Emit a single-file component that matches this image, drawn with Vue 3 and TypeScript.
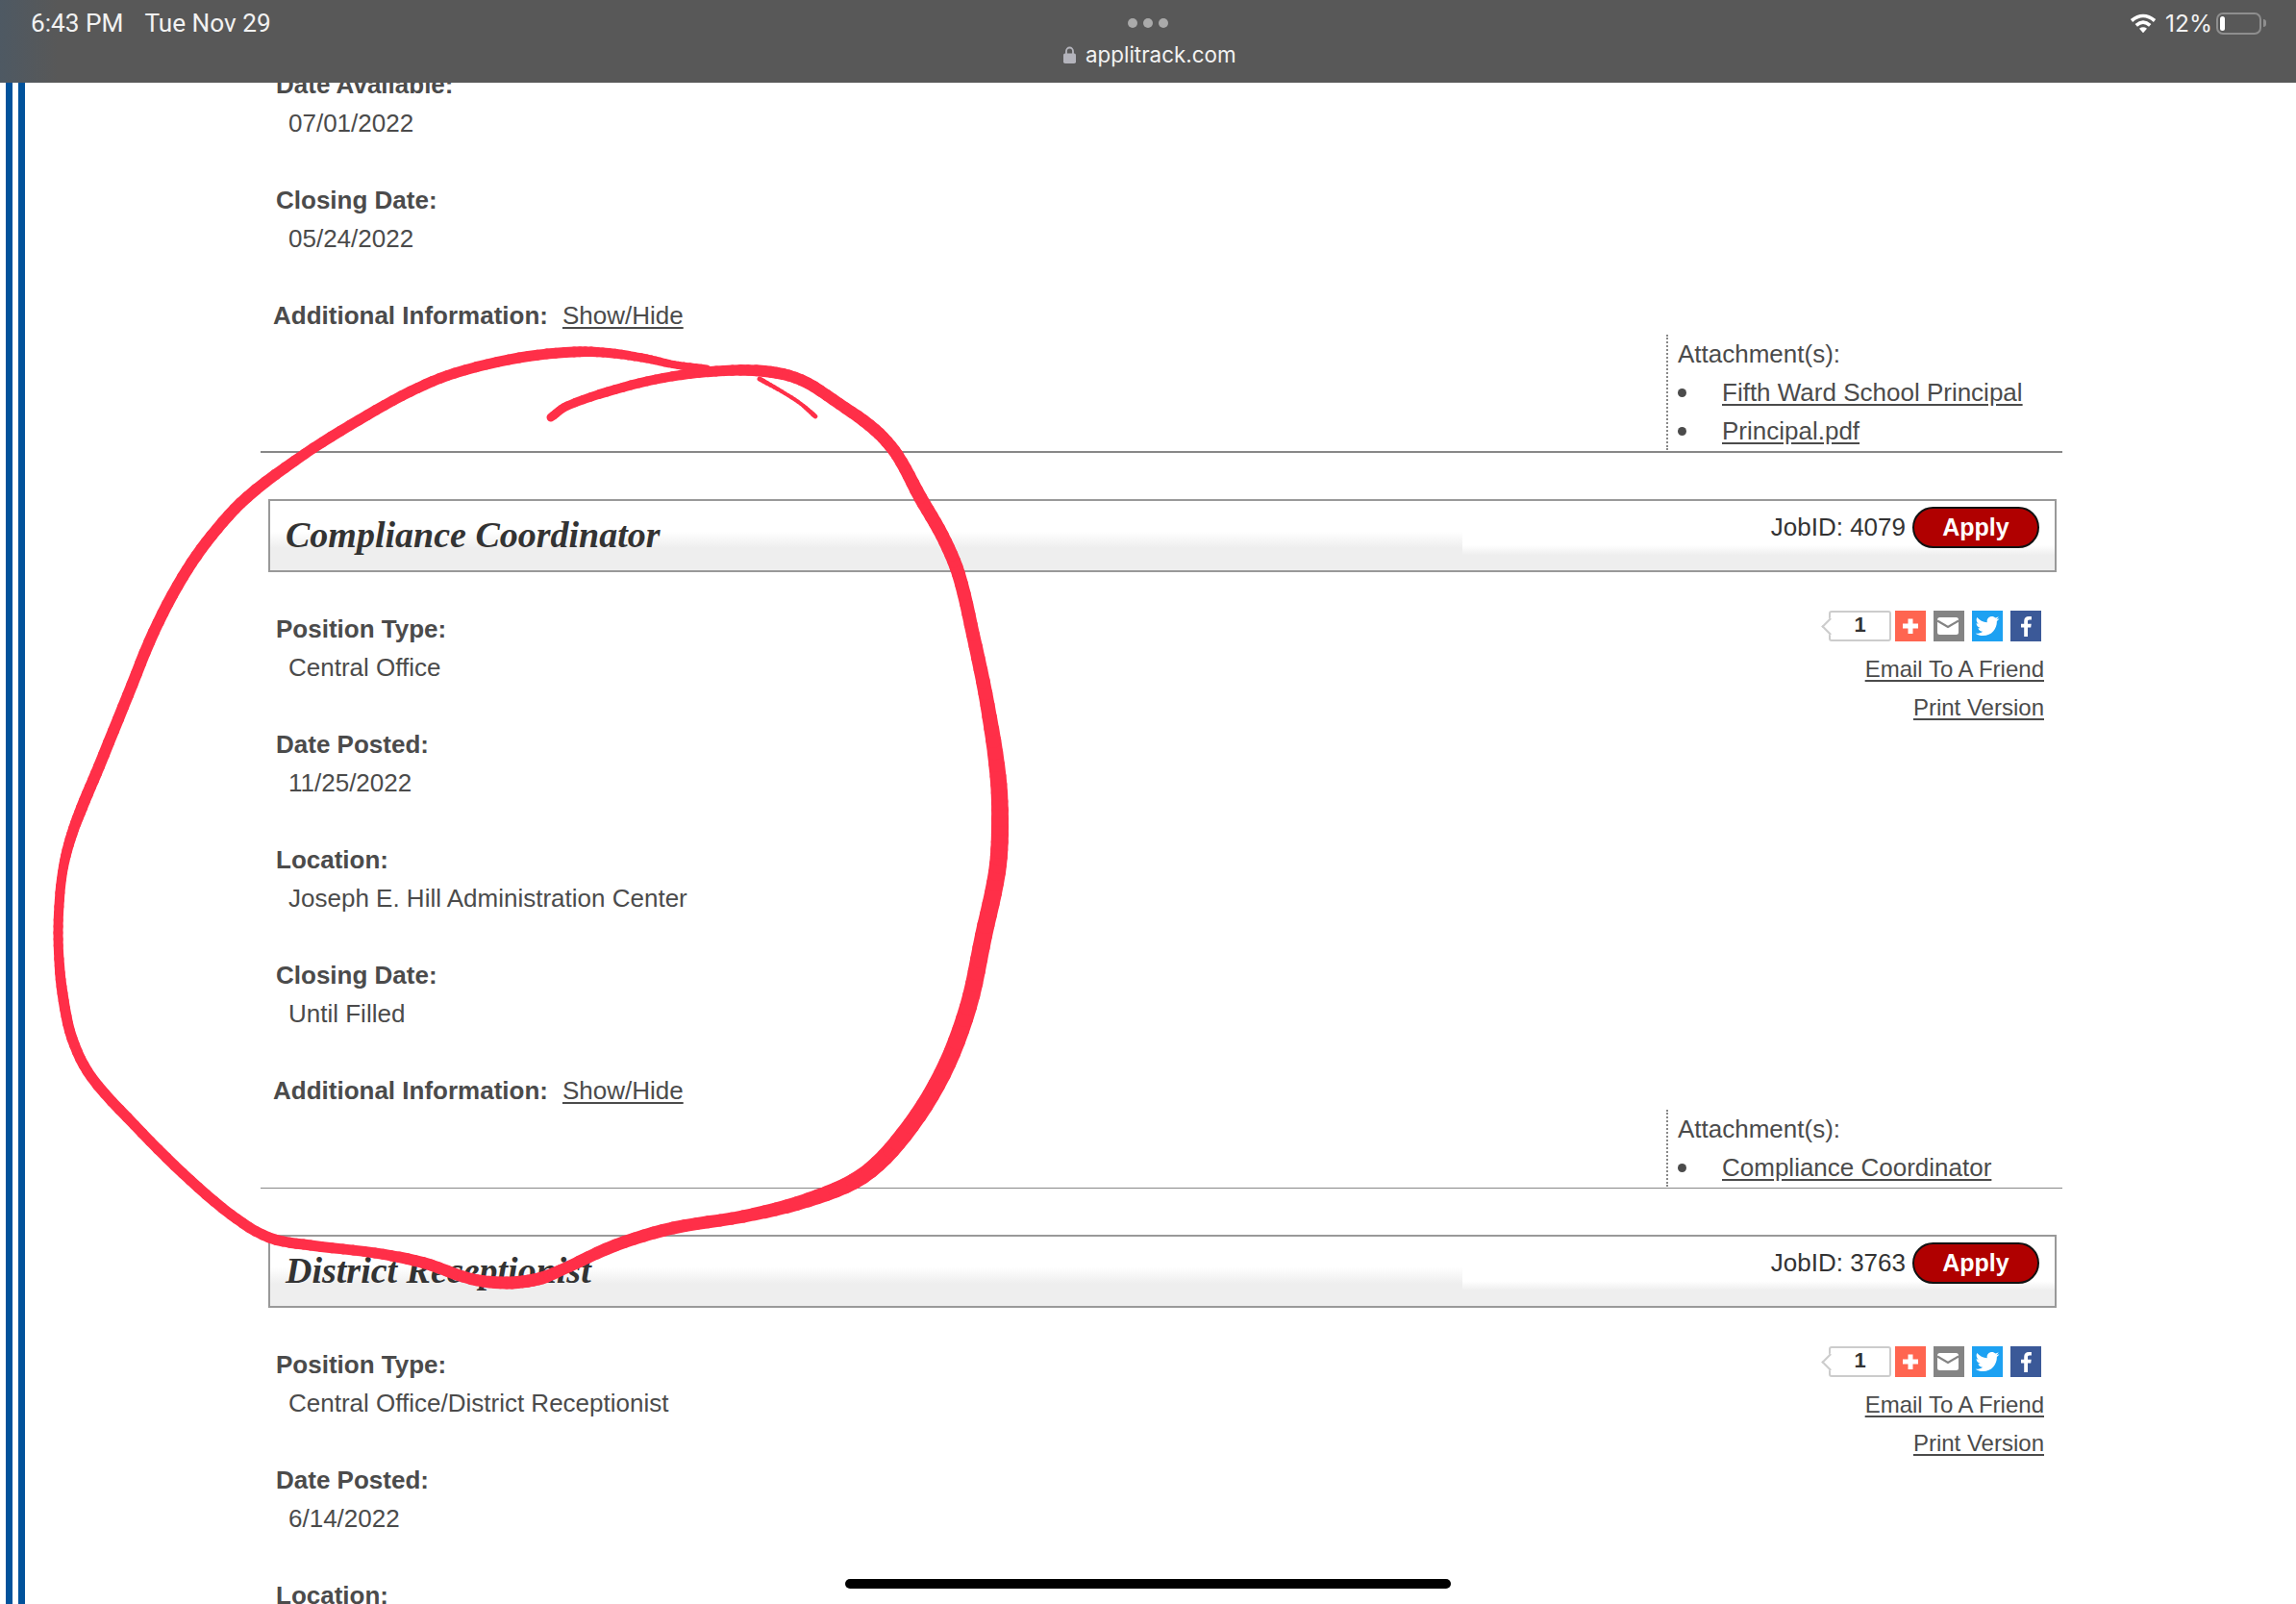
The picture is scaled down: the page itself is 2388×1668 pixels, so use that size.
<script setup lang="ts">
interface Field { label: string; value?: string }
interface Job {
  title?: string
  jobId?: string
  fields: Field[]
  showMore?: boolean
  attachments?: string[]
  thinRule?: boolean
}

const jobs: Job[] = [
  {
    fields: [
      { label: 'Date Available:', value: '07/01/2022' },
      { label: 'Closing Date:', value: '05/24/2022' },
    ],
    showMore: true,
    attachments: ['Fifth Ward School Principal', 'Principal.pdf'],
  },
  {
    title: 'Compliance Coordinator',
    jobId: '4079',
    fields: [
      { label: 'Position Type:', value: 'Central Office' },
      { label: 'Date Posted:', value: '11/25/2022' },
      { label: 'Location:', value: 'Joseph E. Hill Administration Center' },
      { label: 'Closing Date:', value: 'Until Filled' },
    ],
    showMore: true,
    attachments: ['Compliance Coordinator'],
    thinRule: true,
  },
  {
    title: 'District Receptionist',
    jobId: '3763',
    fields: [
      { label: 'Position Type:', value: 'Central Office/District Receptionist' },
      { label: 'Date Posted:', value: '6/14/2022' },
      { label: 'Location:' },
    ],
  },
]

// Hand-drawn marker stroke: x, y, width samples traced from the drawing.
type P = [number, number, number]
const mainStroke: P[] = [
  [735, 384, 9], [700, 379, 8], [673, 373, 9], [633, 367, 10], [597, 366, 11], [540, 372, 11], [473, 388, 11],
  [427, 407, 11], [373, 437, 11], [317, 472, 11], [257, 517, 12], [220, 557, 12], [190, 600, 12],
  [160, 657, 12], [133, 723, 12], [103, 797, 12], [85, 840, 12], [73, 873, 11], [65, 907, 10], [61, 950, 10], [61, 990, 10],
  [65, 1033, 11], [75, 1080, 11], [95, 1120, 11], [140, 1170, 11], [190, 1220, 11], [240, 1263, 11],
  [280, 1287, 11], [323, 1295, 11], [390, 1303, 11], [440, 1313, 12], [490, 1330, 12], [527, 1334, 13],
  [560, 1330, 13], [583, 1321, 12], [640, 1295, 13], [700, 1277, 13], [773, 1265, 13], [840, 1248, 15],
  [897, 1223, 17], [940, 1180, 18], [980, 1117, 18], [1007, 1047, 18], [1023, 973, 18], [1037, 907, 18],
  [1040, 860, 18], [1038, 807, 17], [1027, 733, 15], [1012, 660, 14], [997, 597, 14], [980, 557, 14],
  [957, 517, 14], [933, 473, 13], [910, 447, 13], [873, 420, 12], [833, 395, 12], [795, 386, 12],
  [745, 386, 11], [690, 393, 10], [640, 405, 10], [590, 422, 9], [573, 434, 9],
]
const tailStroke: P[] = [
  [790, 394, 5], [813, 407, 4], [833, 420, 4], [848, 433, 5],
]

function tangent(a: P, c: P): [number, number] {
  const dx = c[0] - a[0]
  const dy = c[1] - a[1]
  const l = Math.hypot(dx, dy) || 1
  return [dx / l, dy / l]
}

function segments(pts: P[]): { d: string; w: number }[] {
  // Short runs with interpolated widths, so the line swells without visible steps.
  const steps = 6
  const out: { d: string; w: number }[] = []
  for (let i = 0; i < pts.length - 1; i++) {
    const a = pts[Math.max(i - 1, 0)]
    const b = pts[i]
    const c = pts[i + 1]
    const d = pts[Math.min(i + 2, pts.length - 1)]
    const len = Math.hypot(c[0] - b[0], c[1] - b[1]) / 3
    const t1 = tangent(a, c)
    const t2 = tangent(b, d)
    const c1 = [b[0] + t1[0] * len, b[1] + t1[1] * len]
    const c2 = [c[0] - t2[0] * len, c[1] - t2[1] * len]
    const at = (t: number): string => {
      const u = 1 - t
      const x = u * u * u * b[0] + 3 * u * u * t * c1[0] + 3 * u * t * t * c2[0] + t * t * t * c[0]
      const y = u * u * u * b[1] + 3 * u * u * t * c1[1] + 3 * u * t * t * c2[1] + t * t * t * c[1]
      return `${x.toFixed(1)} ${y.toFixed(1)}`
    }
    for (let s = 0; s < steps; s++) {
      const t0 = s / steps
      const t = (s + 1) / steps
      out.push({ d: `M${at(t0)}L${at(t)}`, w: b[2] + (c[2] - b[2]) * (t0 + t) / 2 })
    }
  }
  return out
}

const marker = [...segments(mainStroke), ...segments(tailStroke)]
</script>

<template>
  <div class="screen">
    <div class="stripes"></div>

    <main class="content">
      <section v-for="(job, i) in jobs" :key="i" class="job">
        <header v-if="job.title" class="job-head">
          <h2 class="job-title">{{ job.title }}</h2>
          <div class="job-actions">
            <span class="job-id">JobID: {{ job.jobId }}</span>
            <a class="apply">Apply</a>
          </div>
        </header>

        <div class="job-body" :class="{ flush: !job.title }">
          <div class="fields">
            <div v-for="f in job.fields" :key="f.label" class="field">
              <div class="label">{{ f.label }}</div>
              <div v-if="f.value" class="value">{{ f.value }}</div>
            </div>
          </div>

          <aside v-if="job.title" class="share">
            <div class="share-row">
              <span class="count">1</span>
              <span class="tile plus">
                <svg viewBox="0 0 32 32" width="32" height="32"><path d="M13.500 8.500h5v5H24v5h-5.500V24h-5v-5.500H8v-5h5.500z" fill="#fff" /></svg>
              </span>
              <span class="tile mail">
                <svg viewBox="0 0 32 32" width="32" height="32">
                  <rect x="4" y="7" width="22" height="18" rx="2.500" fill="#fff" />
                  <path d="M4 10.500 15 17l11-6.500" fill="none" stroke="#848484" stroke-width="2.200" />
                </svg>
              </span>
              <span class="tile twitter">
                <svg viewBox="-3.500 -3.500 31 31" width="32" height="32"><path fill="#fff" d="M23.954 4.569c-.885.389-1.83.654-2.825.775 1.014-.611 1.794-1.574 2.163-2.723-.951.555-2.005.959-3.127 1.184-.896-.959-2.173-1.559-3.591-1.559-2.717 0-4.92 2.203-4.92 4.917 0 .39.045.765.127 1.124C7.691 8.094 4.066 6.13 1.64 3.161c-.427.722-.666 1.561-.666 2.475 0 1.71.87 3.213 2.188 4.096-.807-.026-1.566-.248-2.228-.616v.061c0 2.385 1.693 4.374 3.946 4.827-.413.111-.849.171-1.296.171-.314 0-.615-.03-.916-.086.631 1.953 2.445 3.377 4.604 3.417-1.68 1.319-3.809 2.105-6.102 2.105-.39 0-.779-.023-1.17-.067 2.189 1.394 4.768 2.209 7.557 2.209 9.054 0 13.999-7.496 13.999-13.986 0-.209 0-.42-.015-.63.961-.689 1.8-1.56 2.46-2.548l-.047-.02z" /></svg>
              </span>
              <span class="tile facebook">
                <svg viewBox="0 0 32 32" width="32" height="32"><path fill="#fff" d="M18 27V17.500h3.200l.5-3.800H18v-2.400c0-1.100.3-1.800 1.900-1.800h2V6.100c-.4 0-1.500-.1-2.900-.1-2.900 0-4.800 1.700-4.800 4.900v2.800H11v3.800h3.200V27z" /></svg>
              </span>
            </div>
            <a class="link small">Email To A Friend</a>
            <a class="link small">Print Version</a>
          </aside>
        </div>

        <div v-if="job.showMore" class="more">
          <span class="more-label">Additional Information:</span>
          <a class="link">Show/Hide</a>
        </div>

        <div v-if="job.attachments" class="attachments">
          <div class="attach-box">
            <div class="attach-title">Attachment(s):</div>
            <ul class="attach-list">
              <li v-for="a in job.attachments" :key="a"><a class="link">{{ a }}</a></li>
            </ul>
          </div>
        </div>
        <hr v-if="job.attachments" class="rule" :class="{ thin: job.thinRule }" />
      </section>
    </main>

    <div class="status">
      <div class="status-left">
        <span>6:43 PM</span>
        <span>Tue Nov 29</span>
      </div>
      <div class="status-mid">
        <div class="dots"><i></i><i></i><i></i></div>
        <div class="url">
          <svg class="lock" viewBox="0 0 13 18" width="13" height="18">
            <path d="M3 8V5a3.500 3.500 0 0 1 7 0v3" fill="none" stroke="#b4b4bc" stroke-width="1.800" />
            <rect x="0" y="7.500" width="13" height="10.500" rx="1.800" fill="#b4b4bc" />
          </svg>
          <span>applitrack.com</span>
        </div>
      </div>
      <div class="status-right">
        <svg viewBox="0 0 28 20" width="28" height="20">
          <path d="M2 7.500Q14-2.500 26 7.500" fill="none" stroke="#fff" stroke-width="3.600" />
          <path d="M6.800 12.300Q14 6 21.200 12.300" fill="none" stroke="#fff" stroke-width="3.600" />
          <path d="M10 15.700Q14 12.800 18 15.700L14 20.300z" fill="#fff" />
        </svg>
        <span class="pct">12%</span>
        <div class="battery"><b></b></div>
        <i class="nub"></i>
      </div>
    </div>

    <svg class="marker" viewBox="0 0 2388 1668" width="2388" height="1668">
      <path v-for="(s, i) in marker" :key="i" :d="s.d" :stroke-width="s.w" fill="none" stroke="#ff2f48" stroke-linecap="round" />
    </svg>

    <div class="home"></div>
  </div>
</template>

<style scoped>
.screen {
  position: relative;
  width: 2388px;
  height: 1668px;
  overflow: hidden;
  display: flex;
  background: #fff;
  color: #4b4b4b;
  font-family: "Liberation Sans", Arial, sans-serif;
  font-size: 26px;
  line-height: 40px;
}
.stripes {
  flex: none;
  width: 7px;
  margin-left: 6px;
  background: #01529b;
  box-shadow: 13px 0 0 #01529b;
}
.content {
  flex: none;
  width: 1874px;
  margin-left: 258px;
  padding-top: 68px;
}
.job-head {
  display: flex;
  justify-content: space-between;
  box-sizing: border-box;
  height: 76px;
  margin: 48px 6px 0 8px;
  padding: 6px 16px 0 16px;
  border: 2px solid #999;
  background:
    linear-gradient(#fff 64%, #eee 78%) right / 616px 100% no-repeat,
    linear-gradient(#fff 44%, #eee 68%);
}
.job-title {
  margin: 0;
  font-family: "Liberation Serif", "Times New Roman", serif;
  font-size: 38px;
  font-style: italic;
  font-weight: 700;
  line-height: 59px;
  color: #333;
}
.job-actions {
  display: flex;
  align-items: flex-start;
  gap: 7px;
}
.job-id {
  line-height: 43px;
  color: #333;
}
.apply {
  box-sizing: border-box;
  width: 132px;
  height: 43px;
  border: 2px solid #111;
  border-radius: 22px;
  background: #b00000;
  color: #fff;
  font-size: 25px;
  font-weight: 700;
  line-height: 39px;
  text-align: center;
}
.job-body {
  display: flex;
  justify-content: space-between;
  padding-top: 39px;
}
.job-body.flush {
  padding-top: 0;
}
.field {
  margin-bottom: 40px;
}
.label {
  padding-left: 16px;
  font-weight: 700;
}
.value {
  padding-left: 29px;
}
.share {
  display: flex;
  flex-direction: column;
  align-items: flex-end;
  padding-right: 19px;
}
.share-row {
  display: flex;
  gap: 8px;
  align-items: center;
  height: 32px;
  margin: 1px 3px 9px 0;
}
.count {
  position: relative;
  box-sizing: border-box;
  width: 65px;
  height: 32px;
  margin-right: -4px;
  border: 2px solid #ccc;
  border-radius: 3px;
  background: #fff;
  color: #333;
  font-size: 22px;
  font-weight: 700;
  line-height: 26px;
  text-align: center;
}
.count::before {
  content: "";
  position: absolute;
  left: -7px;
  top: 8px;
  width: 11px;
  height: 11px;
  background: #fff;
  border-left: 2px solid #ccc;
  border-bottom: 2px solid #ccc;
  transform: rotate(45deg);
}
.tile {
  display: block;
  width: 32px;
  height: 32px;
}
.tile svg {
  display: block;
}
.plus { background: #ff6550; }
.mail { background: #848484; }
.twitter { background: #1da1f2; }
.facebook { background: #3b5998; }
.link {
  color: #4b4b4b;
  text-decoration: underline;
  text-underline-offset: 3px;
}
.link.small {
  font-size: 24px;
}
.more {
  display: flex;
  gap: 15px;
  padding-left: 13px;
}
.more-label {
  font-weight: 700;
}
.attachments {
  display: flex;
  justify-content: flex-end;
  padding-bottom: 1px;
}
.attach-box {
  box-sizing: border-box;
  width: 412px;
  padding-left: 10px;
  border-left: 2px dotted #888;
}
.attach-list {
  margin: 0;
  padding: 0;
  list-style: none;
}
.attach-list li {
  display: flex;
  align-items: center;
  gap: 37px;
}
.attach-list li::before {
  content: "";
  flex: none;
  width: 9px;
  height: 9px;
  border-radius: 50%;
  background: #4b4b4b;
}
.rule {
  height: 2px;
  margin: 0;
  border: 0;
  background: #888;
}
.rule.thin {
  height: 1px;
}
.status {
  position: absolute;
  left: 0;
  top: 0;
  width: 2388px;
  height: 86px;
  background: linear-gradient(90deg, #4e5963 0, #585858 60px);
  color: #f2f2f2;
  font-family: Roboto, Inter, sans-serif;
}
.status-left {
  position: absolute;
  left: 32px;
  top: 4px;
  display: flex;
  gap: 22px;
  font-size: 26.200px;
}
.status-mid {
  position: absolute;
  left: 1106px;
  top: 0;
  width: 180px;
}
.dots {
  display: flex;
  gap: 6px;
  margin: 19px 0 0 67px;
}
.dots i {
  width: 10px;
  height: 10px;
  border-radius: 50%;
  background: #aaa;
}
.url {
  display: flex;
  align-items: center;
  gap: 10px;
  height: 40px;
  margin-top: 8px;
  font-family: Inter, sans-serif;
  font-size: 22.400px;
  white-space: nowrap;
}
.lock {
  flex: none;
}
.status-right {
  position: absolute;
  left: 2215px;
  top: 14px;
  display: flex;
  align-items: flex-start;
  gap: 9px;
}
.pct {
  font-family: Inter, sans-serif;
  font-size: 24.500px;
  line-height: 20px;
}
.battery {
  box-sizing: border-box;
  width: 47px;
  height: 23px;
  margin: -1px 0 0 -5px;
  padding: 2px;
  border: 2px solid #8e8e8e;
  border-radius: 7px;
}
.battery b {
  display: block;
  width: 5px;
  height: 15px;
  background: #fff;
  border-radius: 2.500px;
}
.nub {
  width: 3px;
  height: 8px;
  margin: 6px 0 0 -7px;
  background: #8e8e8e;
  border-radius: 0 3px 3px 0;
}
.marker {
  position: absolute;
  left: 0;
  top: 0;
  pointer-events: none;
}
.home {
  position: absolute;
  left: 879px;
  top: 1642px;
  width: 630px;
  height: 10px;
  border-radius: 5px;
  background: #000;
}
</style>

<style>
html, body {
  margin: 0;
  overflow: hidden;
}
</style>
